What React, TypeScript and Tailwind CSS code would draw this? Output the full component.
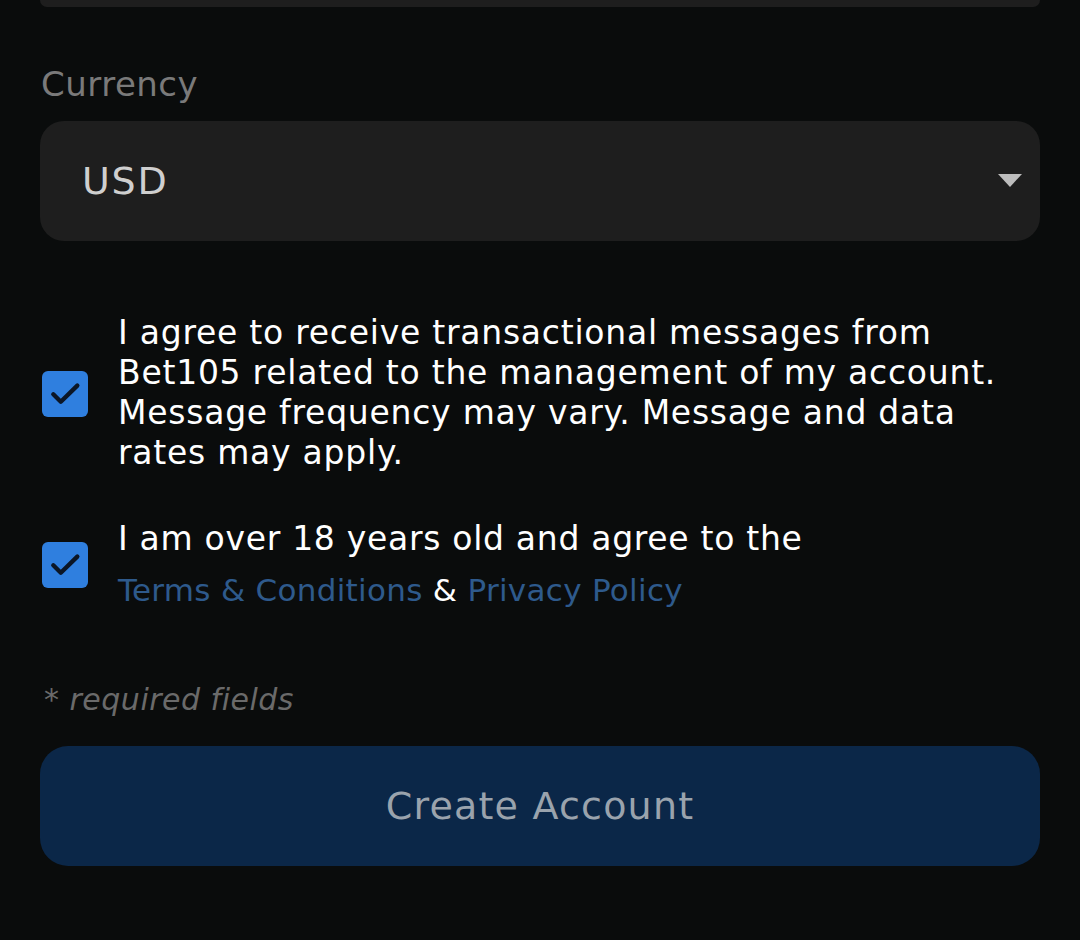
import React from "react";

function Check() {
  return (
    <div className="w-[46px] h-[46px] rounded-[6px] bg-[#2f7fdf] flex items-center justify-center shrink-0">
      <svg width="36" height="36" viewBox="0 0 24 24" fill="none">
        <path d="M4.2 12.2l5 5L20.2 6.4" stroke="#0b1626" strokeWidth="2.9" strokeLinecap="round" strokeLinejoin="round" />
      </svg>
    </div>
  );
}

export default function App() {
  return (
    <div className="w-[1080px] h-[940px] bg-[#0a0c0c] overflow-hidden text-white" style={{ fontFamily: '"DejaVu Sans", "Noto Sans", sans-serif' }}>
      <div className="px-[40px]">
        <div className="h-[7px] bg-[#1e1e1e] rounded-b-[24px]" />
        <div className="mt-[59px] text-[34px] leading-[36px] text-[#7a7a7a] pl-[1px] tracking-[0.5px]">Currency</div>
        <div className="mt-[19px] h-[120px] rounded-[24px] bg-[#1e1e1e] flex items-center justify-between pl-[42px] pr-[18px]">
          <span className="text-[38px] text-[#cfcfcf] tracking-[1.8px]">USD</span>
          <svg width="24" height="14" viewBox="0 0 24 14">
            <path d="M0 0h24L12 13z" fill="#bdbdbd" />
          </svg>
        </div>
        <div className="mt-[73px] flex items-center gap-[30px] pl-[2px]">
          <Check />
          <div className="text-[33px] leading-[40px] text-white tracking-[0.75px] -mt-[1px]">
            I agree to receive transactional messages from<br />
            Bet105 related to the management of my account.<br />
            Message frequency may vary. Message and data<br />
            rates may apply.
          </div>
        </div>
        <div className="mt-[46px] flex items-center gap-[30px] pl-[2px]">
          <Check />
          <div className="text-white">
            <div className="leading-[40px] text-[33px] tracking-[0.7px]">I am over 18 years old and agree to the</div>
            <div className="leading-[40px] mt-[11px] text-[31px] tracking-[0.3px]">
              <span className="text-[#2e5a8c]">Terms &amp; Conditions</span> &amp; <span className="text-[#2e5a8c]">Privacy Policy</span>
            </div>
          </div>
        </div>
        <div className="mt-[72px] text-[30px] italic text-[#6a6a6a] pl-[4px] leading-[36px] tracking-[0.5px]">* required fields</div>
        <div className="mt-[28px] h-[120px] rounded-[28px] bg-[#0b2748] flex items-center justify-center">
          <span className="text-[38px] text-[#9aa3ad] tracking-[1.2px]">Create Account</span>
        </div>
      </div>
    </div>
  );
}
